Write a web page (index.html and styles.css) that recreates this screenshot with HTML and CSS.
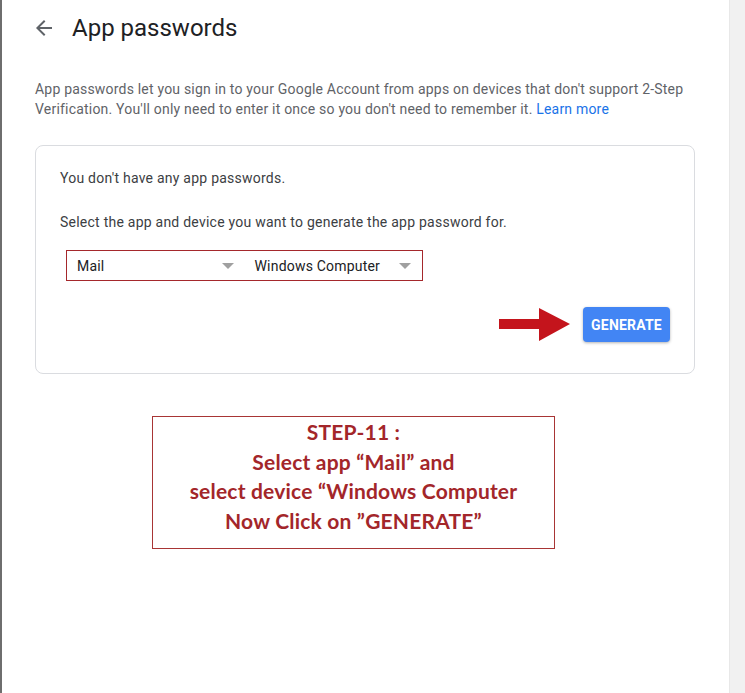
FILE: index.html
```html
<html>
  <head>
    <title>App passwords</title>
    <link rel="stylesheet" href="styles.css">
  </head>
  <body>
    <div class="page">
      <div class="main">
        <div class="header">
          <svg class="back" width="24" height="24" viewBox="0 0 24 24">
            <path d="M20 11H7.83l5.59-5.59L12 4l-8 8 8 8 1.41-1.41L7.83 13H20v-2z" fill="#5f6368"/>
          </svg>
          <h1>App passwords</h1>
        </div>
        <p class="intro">App passwords let you sign in to your Google Account from apps on devices that don't support 2-Step Verification. You'll only need to enter it once so you don't need to remember it. <a href="#">Learn more</a></p>

        <div class="card">
          <p class="line">You don't have any app passwords.</p>
          <p class="line second">Select the app and device you want to generate the app password for.</p>
          <div class="selects">
            <div class="select"><span>Mail</span><i class="caret"></i></div>
            <div class="select"><span>Windows Computer</span><i class="caret"></i></div>
          </div>
          <div class="actions">
            <svg class="pointer" width="71" height="35" viewBox="0 0 71 35">
              <path d="M0 12 H40 V1 L71 17 L40 34 V22 H0 Z" fill="#c4141c"/>
            </svg>
            <button class="generate">GENERATE</button>
          </div>
        </div>

        <div class="step">
          STEP-11 :<br>
          Select app “Mail” and<br>
          select device “Windows Computer<br>
          Now Click on ”GENERATE”
        </div>
      </div>
      <div class="scrollbar"></div>
    </div>
  </body>
</html>
```

FILE: styles.css
```css
/* page frame */
body {
  margin: 0;
  font-family: Roboto, "Liberation Sans", sans-serif;
  background-color: #fff;
}
.page {
  display: flex;
  height: 693px;
  border-left: 2px solid #6e6e6e;
}
.main {
  flex: 1;
  padding: 0 34px 0 33px;
}
.scrollbar {
  width: 15px;
  background-color: #f1f1f1;
  border-left: 1px solid #e8e8e8;
}

/* header */
.header {
  display: flex;
  align-items: center;
  height: 24px;
  margin: 16px 0 0 -3px;
}
.back {
  margin-right: 16px;
}
.header h1 {
  margin: 0;
  font-size: 24px;
  font-weight: 400;
  color: #202124;
}
.intro {
  margin: 39px 0 0;
  font-size: 14px;
  line-height: 20px;
  letter-spacing: 0.2px;
  color: #5f6368;
}
.intro a {
  color: #1a73e8;
  text-decoration: none;
}

/* card */
.card {
  margin-top: 26px;
  border: 1px solid #dadce0;
  border-radius: 8px;
  padding: 22px 24px 31px;
}
.line {
  margin: 0;
  font-size: 14px;
  line-height: 20px;
  letter-spacing: 0.24px;
  color: #3c4043;
}
.line.second {
  margin-top: 24px;
}
.selects {
  display: flex;
  width: 355px;
  height: 29px;
  margin: 18px 0 0 6px;
  border: 1px solid #a5282c;
}
.select {
  flex: 1;
  display: flex;
  align-items: center;
  justify-content: space-between;
  padding: 0 11px 0 10px;
  font-size: 14px;
  letter-spacing: 0.2px;
  color: #202124;
}
.caret {
  width: 0;
  height: 0;
  border-left: 6px solid transparent;
  border-right: 6px solid transparent;
  border-top: 6px solid #a0a0a0;
}
.actions {
  display: flex;
  justify-content: flex-end;
  align-items: center;
  margin-top: 26px;
}
.pointer {
  margin-right: 13px;
}
.generate {
  width: 87px;
  height: 35px;
  border: none;
  border-radius: 4px;
  background-color: #4285f4;
  color: #fff;
  font-family: Roboto, "Liberation Sans", sans-serif;
  font-size: 14px;
  font-weight: 700;
  letter-spacing: 0.2px;
  box-shadow: 0 1px 3px rgba(0, 0, 0, 0.3);
}

/* instruction box */
.step {
  width: 401px;
  margin: 42px 0 0 117px;
  padding: 0 0 13px;
  border: 1px solid #a83535;
  text-align: center;
  font-family: Lato, "Open Sans", sans-serif;
  font-weight: 700;
  font-size: 21px;
  line-height: 29.5px;
  letter-spacing: 0.2px;
  color: #a3262a;
}
```
